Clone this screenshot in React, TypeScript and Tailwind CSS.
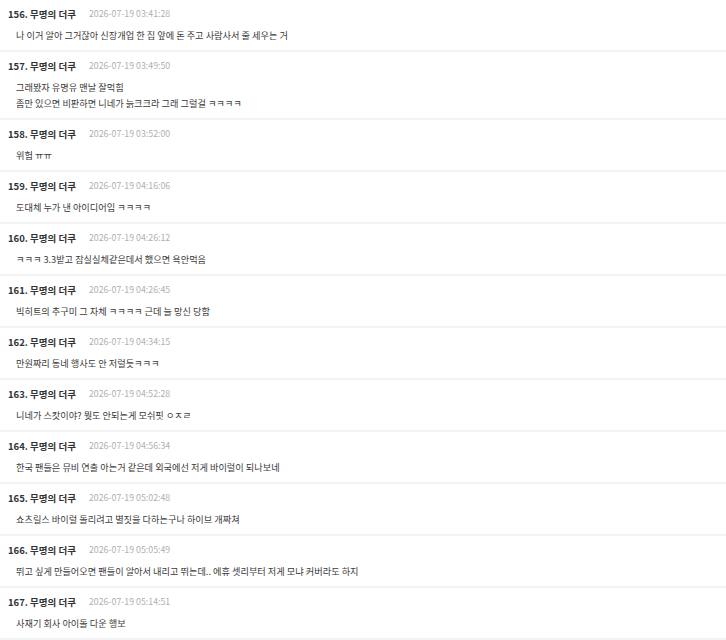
import React from "react";

type Comment = {
  no: number;
  author: string;
  time: string;
  lines: string[];
};

const comments: Comment[] = [
  { no: 156, author: "무명의 더쿠", time: "2026-07-19 03:41:28", lines: ["나 이거 알아 그거잖아 신장개업 한 집 앞에 돈 주고 사람사서 줄 세우는 거"] },
  {
    no: 157,
    author: "무명의 더쿠",
    time: "2026-07-19 03:49:50",
    lines: ["그래봤자 유명유 맨날 잘먹힘", "좀만 있으면 비판하면 니네가 늙크크라 그래 그럴걸 ㅋㅋㅋㅋ"],
  },
  { no: 158, author: "무명의 더쿠", time: "2026-07-19 03:52:00", lines: ["위험 ㅠㅠ"] },
  { no: 159, author: "무명의 더쿠", time: "2026-07-19 04:16:06", lines: ["도대체 누가 낸 아이디어임 ㅋㅋㅋㅋ"] },
  { no: 160, author: "무명의 더쿠", time: "2026-07-19 04:26:12", lines: ["ㅋㅋㅋ 3.3받고 잠실실체같은데서 했으면 욕안먹음"] },
  { no: 161, author: "무명의 더쿠", time: "2026-07-19 04:26:45", lines: ["빅히트의 추구미 그 자체 ㅋㅋㅋㅋ 근데 늘 망신 당함"] },
  { no: 162, author: "무명의 더쿠", time: "2026-07-19 04:34:15", lines: ["만원짜리 동네 행사도 안 저럴듯ㅋㅋㅋ"] },
  { no: 163, author: "무명의 더쿠", time: "2026-07-19 04:52:28", lines: ["니네가 스캇이야? 뭣도 안되는게 모쉬핏 ㅇㅈㄹ"] },
  { no: 164, author: "무명의 더쿠", time: "2026-07-19 04:56:34", lines: ["한국 팬들은 뮤비 연출 아는거 같은데 외국에선 저게 바이럴이 되나보네"] },
  { no: 165, author: "무명의 더쿠", time: "2026-07-19 05:02:48", lines: ["쇼츠릴스 바이럴 돌리려고 별짓을 다하는구나 하이브 개짜쳐"] },
  {
    no: 166,
    author: "무명의 더쿠",
    time: "2026-07-19 05:05:49",
    lines: ["뛰고 싶게 만들어오면 팬들이 알아서 내리고 뛰는데.. 에휴 셋리부터 저게 모냐 커버라도 하지"],
  },
  { no: 167, author: "무명의 더쿠", time: "2026-07-19 05:14:51", lines: ["사재기 회사 아이돌 다운 행보"] },
];

function CommentRow({ c }: { c: Comment }) {
  return (
    <li className="border-b-2 border-[#f3f3f3] px-2 pt-[6px] pb-[7px]">
      <div className="flex items-center gap-[13px] leading-[16px]">
        <span className="text-[9.5px] font-bold text-[#333]">
          {c.no}. {c.author}
        </span>
        <span className="text-[8.8px] text-[#b0b0b0]">{c.time}</span>
      </div>
      <div className="mt-[5px] pl-2 text-[9.2px] leading-[16px] text-[#3a3a3a]">
        {c.lines.map((l) => (
          <p key={l}>{l}</p>
        ))}
      </div>
    </li>
  );
}

export default function App() {
  return (
    <div
      className="min-h-screen w-full bg-white"
      style={{ fontFamily: '"Noto Sans CJK KR", "Noto Sans", sans-serif' }}
    >
      <ul>
        {comments.map((c) => (
          <CommentRow key={c.no} c={c} />
        ))}
      </ul>
    </div>
  );
}
